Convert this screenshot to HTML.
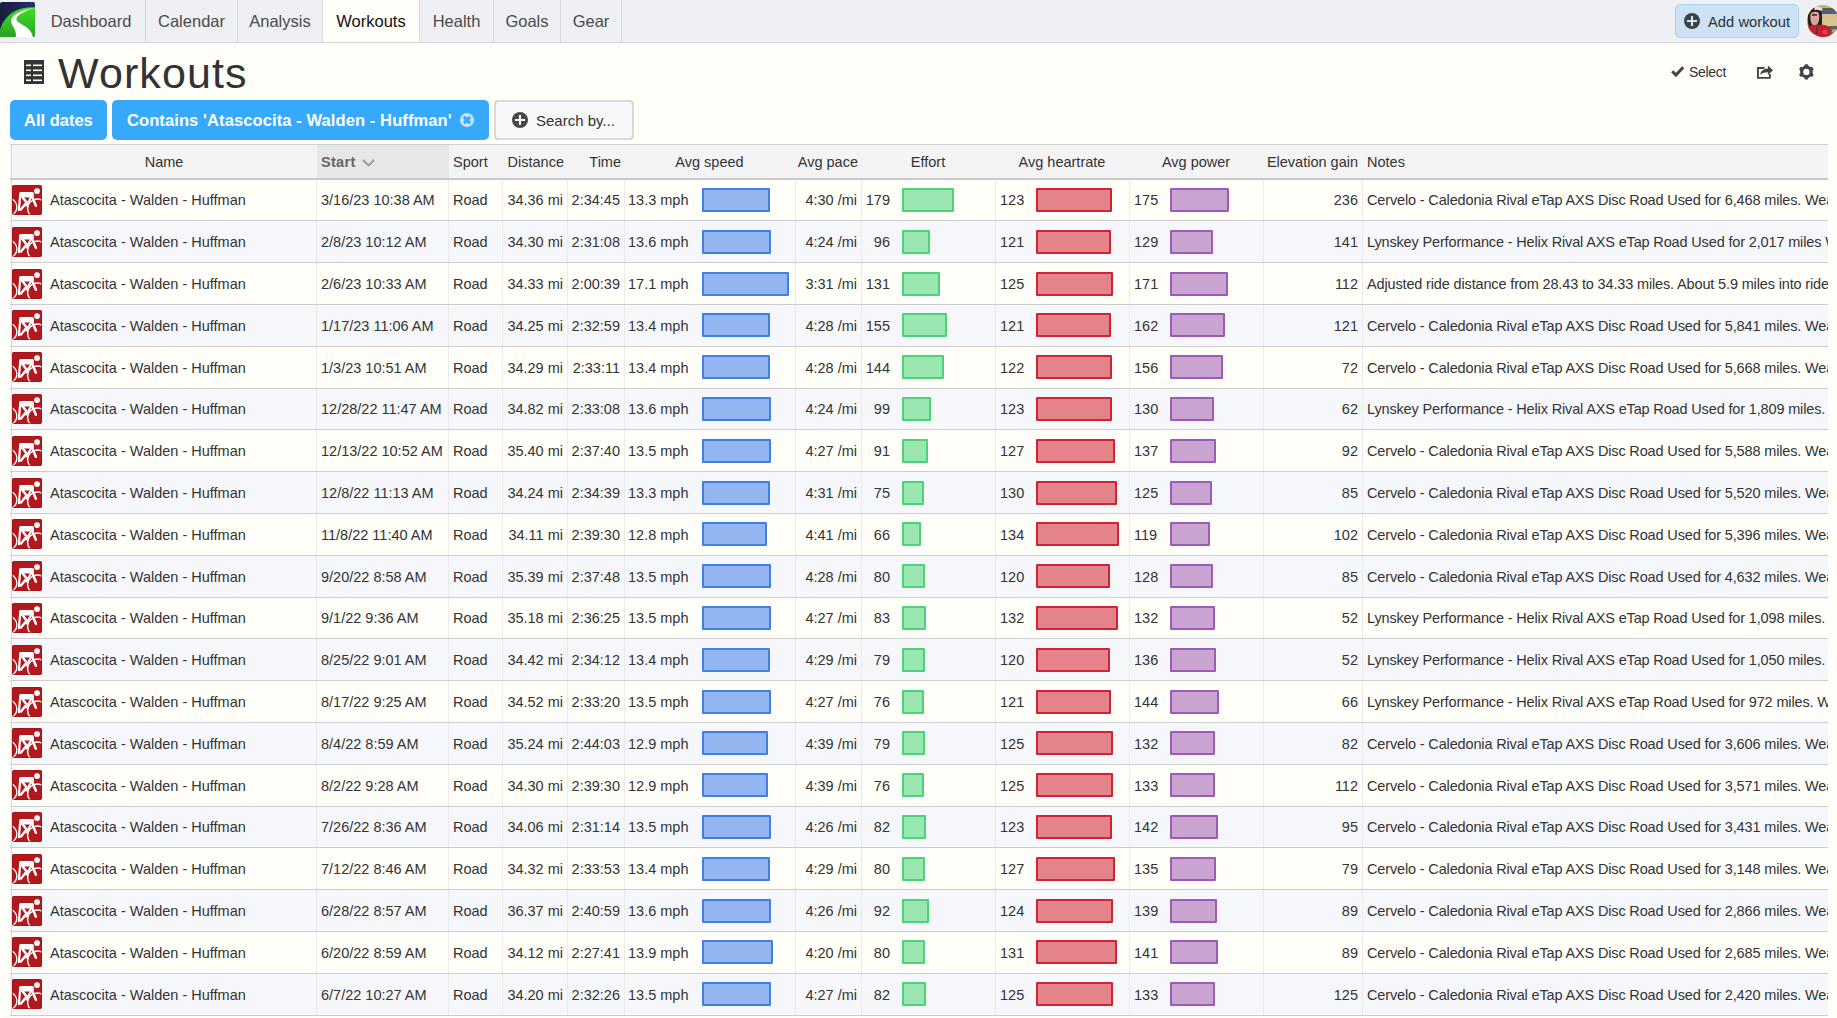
<!DOCTYPE html>
<html><head><meta charset="utf-8"><title>Workouts</title>
<style>
*{box-sizing:border-box}
html,body{margin:0;padding:0}
body{width:1837px;height:1018px;overflow:hidden;position:relative;background:#fffef9;font-family:"Liberation Sans",sans-serif;color:#333}
.nav{position:absolute;left:0;top:0;width:1837px;height:43px;background:#eff0f3;border-bottom:1px solid #d4d6da}
.tab{position:absolute;top:0;height:42px;line-height:42px;font-size:16.5px;color:#4a4a4a;text-align:center}
.sep{position:absolute;top:0;width:1px;height:42px;background:#d8d9dc}
.active{background:#fffef9;color:#111}
.title{position:absolute;left:58px;top:48px;font-size:43px;letter-spacing:1.1px;line-height:50px;color:#333}
.btn{position:absolute;top:100px;height:40px;border-radius:5px;background:#36a9fb;color:#fff;font-weight:bold;font-size:16.5px;line-height:40px;white-space:nowrap}
.tbl{position:absolute;left:10px;top:144px;width:1818px;height:874px;overflow:hidden}
.thead{position:absolute;left:0;top:0;width:1818px;height:36px;background:#f4f4f5;border-top:1px solid #cfd0d2;border-bottom:2px solid #c9c9c9}
.th{position:absolute;top:1px;height:33px;line-height:33px;font-size:14.5px;color:#333;white-space:nowrap}
.r{position:absolute;left:0;width:1818px;border-bottom:1px solid #cdcdcd;box-sizing:content-box}
.odd{background:#fffef9}
.even{background:#f6f7fa}
.vb{position:absolute;top:0;bottom:0;width:1px;background:#ebebeb}
.lb{background:#dcdcdc}
.t{position:absolute;top:var(--tt);line-height:20px;font-size:14.5px;white-space:nowrap;color:#333}
.icw{position:absolute;top:var(--it);width:30px;height:30px;line-height:0}
.bar{position:absolute;top:var(--bt);height:24px;border:2px solid;border-radius:1px}
.bs{background:#93b5f0;border-color:#3f7fe7}
.be{background:#9ae6b0;border-color:#4cd378}
.bh{background:#e5838a;border-color:#d12336}
.bp{background:#c9a4d0;border-color:#9d5bb5}
</style></head><body>
<div class="nav">
 <svg style="position:absolute;left:0;top:2px" width="35" height="35" viewBox="0 0 35 35"><defs><linearGradient id="lg" x1="0" y1="0" x2="1" y2="0"><stop offset="0" stop-color="#191d40"/><stop offset="1" stop-color="#27306a"/></linearGradient><linearGradient id="gg" x1="0" y1="0" x2="0" y2="1"><stop offset="0" stop-color="#3fe02c"/><stop offset="1" stop-color="#2ba21f"/></linearGradient><clipPath id="lc"><rect width="35" height="35" rx="2"/></clipPath></defs><g clip-path="url(#lc)"><rect width="35" height="35" fill="url(#lg)"/><path d="M0 35 L0 28 C2 19 10 10 20 7 C26 5.5 31 5.3 35 5.3 L35 35 Z" fill="url(#gg)"/><path d="M15.7 35 C16.8 31 14.5 27 12.5 23.5 C10.5 20 10.5 16.5 14 13.5 C18 10 26 7 33.4 5.9 C26 8.5 20 11.5 17.5 14.5 C15.5 17 16.5 19.5 20.5 21.5 C26 24.5 31.5 28 33 35 Z" fill="#fff"/></g></svg>
 <div class="tab" style="left:37px;width:108px">Dashboard</div><i class="sep" style="left:145px"></i>
 <div class="tab" style="left:146px;width:91px">Calendar</div><i class="sep" style="left:237px"></i>
 <div class="tab" style="left:238px;width:84px">Analysis</div><i class="sep" style="left:322px"></i>
 <div class="tab active" style="left:323px;width:96px">Workouts</div><i class="sep" style="left:419px"></i>
 <div class="tab" style="left:420px;width:73px">Health</div><i class="sep" style="left:493px"></i>
 <div class="tab" style="left:494px;width:66px">Goals</div><i class="sep" style="left:560px"></i>
 <div class="tab" style="left:561px;width:60px">Gear</div><i class="sep" style="left:621px"></i>
 <div style="position:absolute;left:1675px;top:4px;width:124px;height:34px;border:1px solid #a9d2f3;border-radius:5px;background:#cde2f4"></div>
 <svg style="position:absolute;left:1684px;top:13px" width="16" height="16" viewBox="0 0 16 16"><circle cx="8" cy="8" r="8" fill="#3c4146"/><path d="M8 2.9V13.1M2.9 8H13.1" stroke="#cde2f4" stroke-width="2.1"/></svg>
 <div style="position:absolute;left:1708px;top:5px;height:34px;line-height:34px;font-size:14.7px;color:#2b3035;letter-spacing:0.05px">Add workout</div>
 <svg style="position:absolute;left:1807px;top:5px" width="32" height="32" viewBox="0 0 32 32"><defs><clipPath id="av"><circle cx="16" cy="16" r="16"/></clipPath><linearGradient id="wall" x1="0" y1="0" x2="0" y2="1"><stop offset="0" stop-color="#d6be86"/><stop offset="1" stop-color="#d9c792"/></linearGradient></defs><g clip-path="url(#av)"><rect width="32" height="32" fill="#c9b07a"/><rect x="0" y="3" width="32" height="3" fill="#6b5a3a"/><rect x="12" y="5.5" width="20" height="3.5" fill="#3a64a0"/><rect x="12" y="9" width="20" height="12" fill="url(#wall)"/><rect x="20" y="21" width="12" height="11" fill="#6a6152"/><circle cx="27" cy="26" r="2" fill="#b8ad98"/><path d="M1 8 Q4 2 11 3 Q15 4 15 10 L15 20 Q14 24 11 24 L3 24 Q0 20 1 8Z" fill="#2c1c1a"/><path d="M4 8 Q7 6 11 7 Q13 10 12 15 Q11 20 8 21 Q4 20 3.5 15 Q3 10 4 8Z" fill="#d8a696"/><path d="M5 9 Q7 8.5 10 9.5 L10 11 Q7 10.5 5 11Z" fill="#5a3530"/><path d="M8 2 Q12 1 16 4 L14 6 Q11 4 7 5Z" fill="#dfe6f0"/><path d="M0 22 Q6 19 13 20 Q20 19 23 24 L24 32 L0 32Z" fill="#c41f2a"/><path d="M9 21 L11 21 L10.5 29 L9 29Z" fill="#4a3a48"/><circle cx="18" cy="27" r="2.5" fill="#e04050"/></g></svg>
</div>
<svg style="position:absolute;left:24px;top:60px" width="20" height="24" viewBox="0 0 20 24"><rect width="20" height="24" fill="#333"/><g fill="#fff"><rect x="2" y="4.5" width="5" height="1.6"/><rect x="9" y="4.5" width="9" height="1.6"/><rect x="2" y="9.5" width="5" height="1.6"/><rect x="9" y="9.5" width="9" height="1.6"/><rect x="2" y="14.5" width="5" height="1.6"/><rect x="9" y="14.5" width="9" height="1.6"/><rect x="2" y="19.5" width="5" height="1.6"/><rect x="9" y="19.5" width="9" height="1.6"/></g></svg>
<div class="title">Workouts</div>
<svg style="position:absolute;left:1670px;top:64px" width="15" height="14" viewBox="0 0 15 14"><path d="M2.2 7.3 L5.9 11 L13.2 3.3" stroke="#444" stroke-width="3" fill="none" stroke-linejoin="miter"/></svg>
<div style="position:absolute;left:1689px;top:60px;line-height:24px;font-size:14px;letter-spacing:-0.3px;color:#333">Select</div>
<svg style="position:absolute;left:1756px;top:64px" width="18" height="16" viewBox="0 0 18 16"><path d="M8.5 3.95 H1.95 V13.85 H13.85 V10" stroke="#444" stroke-width="1.9" fill="none"/><path d="M4.2 10.8 C4.8 6.6 7.8 4.7 11.9 4.7 V1.5 L17 6.2 L11.9 10.9 V8.2 C8.6 8.2 6.2 8.9 4.2 10.8 Z" fill="#444"/></svg>
<svg style="position:absolute;left:1798px;top:63px" width="17" height="18" viewBox="0 0 17 18"><g transform="translate(8.4 8.9)" fill="#444"><path fill-rule="evenodd" d="M0 -6.3 A6.3 6.3 0 1 1 0 6.3 A6.3 6.3 0 1 1 0 -6.3Z M0 -3.2 A3.2 3.2 0 1 0 0 3.2 A3.2 3.2 0 1 0 0 -3.2Z"/><rect x="-1.8" y="-7.6" width="3.6" height="4" rx="0.9" transform="rotate(0)"/><rect x="-1.8" y="-7.6" width="3.6" height="4" rx="0.9" transform="rotate(60)"/><rect x="-1.8" y="-7.6" width="3.6" height="4" rx="0.9" transform="rotate(120)"/><rect x="-1.8" y="-7.6" width="3.6" height="4" rx="0.9" transform="rotate(180)"/><rect x="-1.8" y="-7.6" width="3.6" height="4" rx="0.9" transform="rotate(240)"/><rect x="-1.8" y="-7.6" width="3.6" height="4" rx="0.9" transform="rotate(300)"/></g></svg>
<div class="btn" style="left:10px;width:97px;padding-left:14px">All dates</div>
<div class="btn" style="left:112px;width:377px;padding-left:15px;letter-spacing:0.1px">Contains 'Atascocita - Walden - Huffman'</div>
<svg style="position:absolute;left:459px;top:112px" width="16" height="16" viewBox="0 0 16 16"><circle cx="8" cy="8" r="7" fill="#c6e4fb"/><path d="M4.9 4.9L11.1 11.1M11.1 4.9L4.9 11.1" stroke="#36a9fb" stroke-width="3"/></svg>
<div style="position:absolute;left:494px;top:100px;width:140px;height:40px;border:2px solid #d9d9d9;border-radius:4px;background:#f7f8fa"></div>
<svg style="position:absolute;left:512px;top:112px" width="16" height="16" viewBox="0 0 16 16"><circle cx="8" cy="8" r="8" fill="#474747"/><path d="M8 2.9V13.1M2.9 8H13.1" stroke="#f7f8fa" stroke-width="2.1"/></svg>
<div style="position:absolute;left:536px;top:101px;line-height:40px;font-size:15px;color:#333">Search by...</div>
<div class="tbl">
<div class="thead">
 <i style="position:absolute;left:1px;top:0;width:1px;height:33px;background:#dcdcdc"></i>
 <div style="position:absolute;left:307px;top:0;width:132px;height:33px;background:#e7e7e7"></div>
 <div class="th" style="left:1px;width:306px;text-align:center">Name</div>
 <div class="th" style="left:311px;font-weight:bold;color:#666;letter-spacing:0.3px">Start</div>
 <svg style="position:absolute;left:352px;top:13.5px" width="13" height="8" viewBox="0 0 13 8"><path d="M1 1L6.5 6.5L12 1" stroke="#9a9a9a" stroke-width="1.8" fill="none"/></svg>
 <div class="th" style="left:443px">Sport</div>
 <div class="th" style="right:1264px">Distance</div>
 <div class="th" style="right:1207px">Time</div>
 <div class="th" style="left:614px;width:171px;text-align:center">Avg speed</div>
 <div class="th" style="right:970px">Avg pace</div>
 <div class="th" style="left:851px;width:134px;text-align:center">Effort</div>
 <div class="th" style="left:985px;width:134px;text-align:center">Avg heartrate</div>
 <div class="th" style="left:1119px;width:134px;text-align:center">Avg power</div>
 <div class="th" style="right:470px">Elevation gain</div>
 <div class="th" style="left:1357px">Notes</div>
</div>
<div class="r odd" style="top:36px;height:40px;--tt:10px;--bt:8px;--it:5px"><i class="vb" style="left:306px"></i><i class="vb" style="left:438px"></i><i class="vb" style="left:492px"></i><i class="vb" style="left:557px"></i><i class="vb" style="left:614px"></i><i class="vb" style="left:785px"></i><i class="vb" style="left:851px"></i><i class="vb" style="left:985px"></i><i class="vb" style="left:1119px"></i><i class="vb" style="left:1253px"></i><i class="vb" style="left:1352px"></i><i class="vb lb" style="left:1px"></i><div class="icw" style="left:2px"><svg width="30" height="30" viewBox="0 0 30 30"><defs><clipPath id="c"><rect width="30" height="30" rx="2"/></clipPath></defs><rect width="30" height="30" rx="2" fill="#b3191c"/><g clip-path="url(#c)" stroke="#fff" fill="none"><circle cx="-4" cy="22" r="8.9" stroke-width="1.3"/><circle cx="25.2" cy="23.6" r="9.6" stroke-width="1.4"/><g stroke-linecap="round"><path d="M8.2 10 L6.9 25.2" stroke-width="2.2"/><path d="M10 11.5 L14.6 17.4 L9 24.6" stroke-width="2.4" stroke-linejoin="round"/><path d="M19.3 12 L14.2 20.5" stroke-width="2.1"/><path d="M20.3 12.2 L23.9 20.8" stroke-width="2.5"/></g></g><rect x="7.1" y="6.9" width="14.8" height="5.5" rx="1.5" fill="#fff"/><circle cx="25.05" cy="6.04" r="2.9" fill="#fff"/><rect x="0.5" y="0.5" width="29" height="29" rx="1.6" fill="none" stroke="#9c1417" stroke-width="1" stroke-opacity="0.7"/></svg></div><div class="t" style="left:40px">Atascocita - Walden - Huffman</div><div class="t" style="left:311px">3/16/23 10:38 AM</div><div class="t" style="left:443px">Road</div><div class="t rt" style="right:1265px">34.36 mi</div><div class="t rt" style="right:1208px">2:34:45</div><div class="t" style="left:618px">13.3 mph</div><div class="bar bs" style="left:692px;width:68px"></div><div class="t rt" style="right:971px">4:30 /mi</div><div class="t rt" style="right:938px">179</div><div class="bar be" style="left:892px;width:52px"></div><div class="t" style="left:990px">123</div><div class="bar bh" style="left:1026px;width:76px"></div><div class="t" style="left:1124px">175</div><div class="bar bp" style="left:1160px;width:59px"></div><div class="t rt" style="right:470px">236</div><div class="t" style="left:1357px;letter-spacing:-0.15px">Cervelo - Caledonia Rival eTap AXS Disc Road Used for 6,468 miles. Wear</div></div><div class="r even" style="top:77px;height:41px;--tt:11px;--bt:9px;--it:6px"><i class="vb" style="left:306px"></i><i class="vb" style="left:438px"></i><i class="vb" style="left:492px"></i><i class="vb" style="left:557px"></i><i class="vb" style="left:614px"></i><i class="vb" style="left:785px"></i><i class="vb" style="left:851px"></i><i class="vb" style="left:985px"></i><i class="vb" style="left:1119px"></i><i class="vb" style="left:1253px"></i><i class="vb" style="left:1352px"></i><i class="vb lb" style="left:1px"></i><div class="icw" style="left:2px"><svg width="30" height="30" viewBox="0 0 30 30"><defs><clipPath id="c"><rect width="30" height="30" rx="2"/></clipPath></defs><rect width="30" height="30" rx="2" fill="#b3191c"/><g clip-path="url(#c)" stroke="#fff" fill="none"><circle cx="-4" cy="22" r="8.9" stroke-width="1.3"/><circle cx="25.2" cy="23.6" r="9.6" stroke-width="1.4"/><g stroke-linecap="round"><path d="M8.2 10 L6.9 25.2" stroke-width="2.2"/><path d="M10 11.5 L14.6 17.4 L9 24.6" stroke-width="2.4" stroke-linejoin="round"/><path d="M19.3 12 L14.2 20.5" stroke-width="2.1"/><path d="M20.3 12.2 L23.9 20.8" stroke-width="2.5"/></g></g><rect x="7.1" y="6.9" width="14.8" height="5.5" rx="1.5" fill="#fff"/><circle cx="25.05" cy="6.04" r="2.9" fill="#fff"/><rect x="0.5" y="0.5" width="29" height="29" rx="1.6" fill="none" stroke="#9c1417" stroke-width="1" stroke-opacity="0.7"/></svg></div><div class="t" style="left:40px">Atascocita - Walden - Huffman</div><div class="t" style="left:311px">2/8/23 10:12 AM</div><div class="t" style="left:443px">Road</div><div class="t rt" style="right:1265px">34.30 mi</div><div class="t rt" style="right:1208px">2:31:08</div><div class="t" style="left:618px">13.6 mph</div><div class="bar bs" style="left:692px;width:69px"></div><div class="t rt" style="right:971px">4:24 /mi</div><div class="t rt" style="right:938px">96</div><div class="bar be" style="left:892px;width:28px"></div><div class="t" style="left:990px">121</div><div class="bar bh" style="left:1026px;width:75px"></div><div class="t" style="left:1124px">129</div><div class="bar bp" style="left:1160px;width:43px"></div><div class="t rt" style="right:470px">141</div><div class="t" style="left:1357px;letter-spacing:-0.15px">Lynskey Performance - Helix Rival AXS eTap Road Used for 2,017 miles Wear</div></div><div class="r odd" style="top:119px;height:41px;--tt:11px;--bt:9px;--it:6px"><i class="vb" style="left:306px"></i><i class="vb" style="left:438px"></i><i class="vb" style="left:492px"></i><i class="vb" style="left:557px"></i><i class="vb" style="left:614px"></i><i class="vb" style="left:785px"></i><i class="vb" style="left:851px"></i><i class="vb" style="left:985px"></i><i class="vb" style="left:1119px"></i><i class="vb" style="left:1253px"></i><i class="vb" style="left:1352px"></i><i class="vb lb" style="left:1px"></i><div class="icw" style="left:2px"><svg width="30" height="30" viewBox="0 0 30 30"><defs><clipPath id="c"><rect width="30" height="30" rx="2"/></clipPath></defs><rect width="30" height="30" rx="2" fill="#b3191c"/><g clip-path="url(#c)" stroke="#fff" fill="none"><circle cx="-4" cy="22" r="8.9" stroke-width="1.3"/><circle cx="25.2" cy="23.6" r="9.6" stroke-width="1.4"/><g stroke-linecap="round"><path d="M8.2 10 L6.9 25.2" stroke-width="2.2"/><path d="M10 11.5 L14.6 17.4 L9 24.6" stroke-width="2.4" stroke-linejoin="round"/><path d="M19.3 12 L14.2 20.5" stroke-width="2.1"/><path d="M20.3 12.2 L23.9 20.8" stroke-width="2.5"/></g></g><rect x="7.1" y="6.9" width="14.8" height="5.5" rx="1.5" fill="#fff"/><circle cx="25.05" cy="6.04" r="2.9" fill="#fff"/><rect x="0.5" y="0.5" width="29" height="29" rx="1.6" fill="none" stroke="#9c1417" stroke-width="1" stroke-opacity="0.7"/></svg></div><div class="t" style="left:40px">Atascocita - Walden - Huffman</div><div class="t" style="left:311px">2/6/23 10:33 AM</div><div class="t" style="left:443px">Road</div><div class="t rt" style="right:1265px">34.33 mi</div><div class="t rt" style="right:1208px">2:00:39</div><div class="t" style="left:618px">17.1 mph</div><div class="bar bs" style="left:692px;width:87px"></div><div class="t rt" style="right:971px">3:31 /mi</div><div class="t rt" style="right:938px">131</div><div class="bar be" style="left:892px;width:38px"></div><div class="t" style="left:990px">125</div><div class="bar bh" style="left:1026px;width:77px"></div><div class="t" style="left:1124px">171</div><div class="bar bp" style="left:1160px;width:58px"></div><div class="t rt" style="right:470px">112</div><div class="t" style="left:1357px;letter-spacing:-0.15px">Adjusted ride distance from 28.43 to 34.33 miles. About 5.9 miles into ride</div></div><div class="r even" style="top:161px;height:41px;--tt:11px;--bt:8px;--it:5px"><i class="vb" style="left:306px"></i><i class="vb" style="left:438px"></i><i class="vb" style="left:492px"></i><i class="vb" style="left:557px"></i><i class="vb" style="left:614px"></i><i class="vb" style="left:785px"></i><i class="vb" style="left:851px"></i><i class="vb" style="left:985px"></i><i class="vb" style="left:1119px"></i><i class="vb" style="left:1253px"></i><i class="vb" style="left:1352px"></i><i class="vb lb" style="left:1px"></i><div class="icw" style="left:2px"><svg width="30" height="30" viewBox="0 0 30 30"><defs><clipPath id="c"><rect width="30" height="30" rx="2"/></clipPath></defs><rect width="30" height="30" rx="2" fill="#b3191c"/><g clip-path="url(#c)" stroke="#fff" fill="none"><circle cx="-4" cy="22" r="8.9" stroke-width="1.3"/><circle cx="25.2" cy="23.6" r="9.6" stroke-width="1.4"/><g stroke-linecap="round"><path d="M8.2 10 L6.9 25.2" stroke-width="2.2"/><path d="M10 11.5 L14.6 17.4 L9 24.6" stroke-width="2.4" stroke-linejoin="round"/><path d="M19.3 12 L14.2 20.5" stroke-width="2.1"/><path d="M20.3 12.2 L23.9 20.8" stroke-width="2.5"/></g></g><rect x="7.1" y="6.9" width="14.8" height="5.5" rx="1.5" fill="#fff"/><circle cx="25.05" cy="6.04" r="2.9" fill="#fff"/><rect x="0.5" y="0.5" width="29" height="29" rx="1.6" fill="none" stroke="#9c1417" stroke-width="1" stroke-opacity="0.7"/></svg></div><div class="t" style="left:40px">Atascocita - Walden - Huffman</div><div class="t" style="left:311px">1/17/23 11:06 AM</div><div class="t" style="left:443px">Road</div><div class="t rt" style="right:1265px">34.25 mi</div><div class="t rt" style="right:1208px">2:32:59</div><div class="t" style="left:618px">13.4 mph</div><div class="bar bs" style="left:692px;width:68px"></div><div class="t rt" style="right:971px">4:28 /mi</div><div class="t rt" style="right:938px">155</div><div class="bar be" style="left:892px;width:45px"></div><div class="t" style="left:990px">121</div><div class="bar bh" style="left:1026px;width:75px"></div><div class="t" style="left:1124px">162</div><div class="bar bp" style="left:1160px;width:55px"></div><div class="t rt" style="right:470px">121</div><div class="t" style="left:1357px;letter-spacing:-0.15px">Cervelo - Caledonia Rival eTap AXS Disc Road Used for 5,841 miles. Wear</div></div><div class="r odd" style="top:203px;height:41px;--tt:11px;--bt:8px;--it:5px"><i class="vb" style="left:306px"></i><i class="vb" style="left:438px"></i><i class="vb" style="left:492px"></i><i class="vb" style="left:557px"></i><i class="vb" style="left:614px"></i><i class="vb" style="left:785px"></i><i class="vb" style="left:851px"></i><i class="vb" style="left:985px"></i><i class="vb" style="left:1119px"></i><i class="vb" style="left:1253px"></i><i class="vb" style="left:1352px"></i><i class="vb lb" style="left:1px"></i><div class="icw" style="left:2px"><svg width="30" height="30" viewBox="0 0 30 30"><defs><clipPath id="c"><rect width="30" height="30" rx="2"/></clipPath></defs><rect width="30" height="30" rx="2" fill="#b3191c"/><g clip-path="url(#c)" stroke="#fff" fill="none"><circle cx="-4" cy="22" r="8.9" stroke-width="1.3"/><circle cx="25.2" cy="23.6" r="9.6" stroke-width="1.4"/><g stroke-linecap="round"><path d="M8.2 10 L6.9 25.2" stroke-width="2.2"/><path d="M10 11.5 L14.6 17.4 L9 24.6" stroke-width="2.4" stroke-linejoin="round"/><path d="M19.3 12 L14.2 20.5" stroke-width="2.1"/><path d="M20.3 12.2 L23.9 20.8" stroke-width="2.5"/></g></g><rect x="7.1" y="6.9" width="14.8" height="5.5" rx="1.5" fill="#fff"/><circle cx="25.05" cy="6.04" r="2.9" fill="#fff"/><rect x="0.5" y="0.5" width="29" height="29" rx="1.6" fill="none" stroke="#9c1417" stroke-width="1" stroke-opacity="0.7"/></svg></div><div class="t" style="left:40px">Atascocita - Walden - Huffman</div><div class="t" style="left:311px">1/3/23 10:51 AM</div><div class="t" style="left:443px">Road</div><div class="t rt" style="right:1265px">34.29 mi</div><div class="t rt" style="right:1208px">2:33:11</div><div class="t" style="left:618px">13.4 mph</div><div class="bar bs" style="left:692px;width:68px"></div><div class="t rt" style="right:971px">4:28 /mi</div><div class="t rt" style="right:938px">144</div><div class="bar be" style="left:892px;width:42px"></div><div class="t" style="left:990px">122</div><div class="bar bh" style="left:1026px;width:76px"></div><div class="t" style="left:1124px">156</div><div class="bar bp" style="left:1160px;width:53px"></div><div class="t rt" style="right:470px">72</div><div class="t" style="left:1357px;letter-spacing:-0.15px">Cervelo - Caledonia Rival eTap AXS Disc Road Used for 5,668 miles. Wear</div></div><div class="r even" style="top:245px;height:40px;--tt:10px;--bt:8px;--it:5px"><i class="vb" style="left:306px"></i><i class="vb" style="left:438px"></i><i class="vb" style="left:492px"></i><i class="vb" style="left:557px"></i><i class="vb" style="left:614px"></i><i class="vb" style="left:785px"></i><i class="vb" style="left:851px"></i><i class="vb" style="left:985px"></i><i class="vb" style="left:1119px"></i><i class="vb" style="left:1253px"></i><i class="vb" style="left:1352px"></i><i class="vb lb" style="left:1px"></i><div class="icw" style="left:2px"><svg width="30" height="30" viewBox="0 0 30 30"><defs><clipPath id="c"><rect width="30" height="30" rx="2"/></clipPath></defs><rect width="30" height="30" rx="2" fill="#b3191c"/><g clip-path="url(#c)" stroke="#fff" fill="none"><circle cx="-4" cy="22" r="8.9" stroke-width="1.3"/><circle cx="25.2" cy="23.6" r="9.6" stroke-width="1.4"/><g stroke-linecap="round"><path d="M8.2 10 L6.9 25.2" stroke-width="2.2"/><path d="M10 11.5 L14.6 17.4 L9 24.6" stroke-width="2.4" stroke-linejoin="round"/><path d="M19.3 12 L14.2 20.5" stroke-width="2.1"/><path d="M20.3 12.2 L23.9 20.8" stroke-width="2.5"/></g></g><rect x="7.1" y="6.9" width="14.8" height="5.5" rx="1.5" fill="#fff"/><circle cx="25.05" cy="6.04" r="2.9" fill="#fff"/><rect x="0.5" y="0.5" width="29" height="29" rx="1.6" fill="none" stroke="#9c1417" stroke-width="1" stroke-opacity="0.7"/></svg></div><div class="t" style="left:40px">Atascocita - Walden - Huffman</div><div class="t" style="left:311px">12/28/22 11:47 AM</div><div class="t" style="left:443px">Road</div><div class="t rt" style="right:1265px">34.82 mi</div><div class="t rt" style="right:1208px">2:33:08</div><div class="t" style="left:618px">13.6 mph</div><div class="bar bs" style="left:692px;width:69px"></div><div class="t rt" style="right:971px">4:24 /mi</div><div class="t rt" style="right:938px">99</div><div class="bar be" style="left:892px;width:29px"></div><div class="t" style="left:990px">123</div><div class="bar bh" style="left:1026px;width:76px"></div><div class="t" style="left:1124px">130</div><div class="bar bp" style="left:1160px;width:44px"></div><div class="t rt" style="right:470px">62</div><div class="t" style="left:1357px;letter-spacing:-0.15px">Lynskey Performance - Helix Rival AXS eTap Road Used for 1,809 miles. Wear</div></div><div class="r odd" style="top:286px;height:41px;--tt:11px;--bt:9px;--it:6px"><i class="vb" style="left:306px"></i><i class="vb" style="left:438px"></i><i class="vb" style="left:492px"></i><i class="vb" style="left:557px"></i><i class="vb" style="left:614px"></i><i class="vb" style="left:785px"></i><i class="vb" style="left:851px"></i><i class="vb" style="left:985px"></i><i class="vb" style="left:1119px"></i><i class="vb" style="left:1253px"></i><i class="vb" style="left:1352px"></i><i class="vb lb" style="left:1px"></i><div class="icw" style="left:2px"><svg width="30" height="30" viewBox="0 0 30 30"><defs><clipPath id="c"><rect width="30" height="30" rx="2"/></clipPath></defs><rect width="30" height="30" rx="2" fill="#b3191c"/><g clip-path="url(#c)" stroke="#fff" fill="none"><circle cx="-4" cy="22" r="8.9" stroke-width="1.3"/><circle cx="25.2" cy="23.6" r="9.6" stroke-width="1.4"/><g stroke-linecap="round"><path d="M8.2 10 L6.9 25.2" stroke-width="2.2"/><path d="M10 11.5 L14.6 17.4 L9 24.6" stroke-width="2.4" stroke-linejoin="round"/><path d="M19.3 12 L14.2 20.5" stroke-width="2.1"/><path d="M20.3 12.2 L23.9 20.8" stroke-width="2.5"/></g></g><rect x="7.1" y="6.9" width="14.8" height="5.5" rx="1.5" fill="#fff"/><circle cx="25.05" cy="6.04" r="2.9" fill="#fff"/><rect x="0.5" y="0.5" width="29" height="29" rx="1.6" fill="none" stroke="#9c1417" stroke-width="1" stroke-opacity="0.7"/></svg></div><div class="t" style="left:40px">Atascocita - Walden - Huffman</div><div class="t" style="left:311px">12/13/22 10:52 AM</div><div class="t" style="left:443px">Road</div><div class="t rt" style="right:1265px">35.40 mi</div><div class="t rt" style="right:1208px">2:37:40</div><div class="t" style="left:618px">13.5 mph</div><div class="bar bs" style="left:692px;width:69px"></div><div class="t rt" style="right:971px">4:27 /mi</div><div class="t rt" style="right:938px">91</div><div class="bar be" style="left:892px;width:26px"></div><div class="t" style="left:990px">127</div><div class="bar bh" style="left:1026px;width:79px"></div><div class="t" style="left:1124px">137</div><div class="bar bp" style="left:1160px;width:46px"></div><div class="t rt" style="right:470px">92</div><div class="t" style="left:1357px;letter-spacing:-0.15px">Cervelo - Caledonia Rival eTap AXS Disc Road Used for 5,588 miles. Wear</div></div><div class="r even" style="top:328px;height:41px;--tt:11px;--bt:9px;--it:6px"><i class="vb" style="left:306px"></i><i class="vb" style="left:438px"></i><i class="vb" style="left:492px"></i><i class="vb" style="left:557px"></i><i class="vb" style="left:614px"></i><i class="vb" style="left:785px"></i><i class="vb" style="left:851px"></i><i class="vb" style="left:985px"></i><i class="vb" style="left:1119px"></i><i class="vb" style="left:1253px"></i><i class="vb" style="left:1352px"></i><i class="vb lb" style="left:1px"></i><div class="icw" style="left:2px"><svg width="30" height="30" viewBox="0 0 30 30"><defs><clipPath id="c"><rect width="30" height="30" rx="2"/></clipPath></defs><rect width="30" height="30" rx="2" fill="#b3191c"/><g clip-path="url(#c)" stroke="#fff" fill="none"><circle cx="-4" cy="22" r="8.9" stroke-width="1.3"/><circle cx="25.2" cy="23.6" r="9.6" stroke-width="1.4"/><g stroke-linecap="round"><path d="M8.2 10 L6.9 25.2" stroke-width="2.2"/><path d="M10 11.5 L14.6 17.4 L9 24.6" stroke-width="2.4" stroke-linejoin="round"/><path d="M19.3 12 L14.2 20.5" stroke-width="2.1"/><path d="M20.3 12.2 L23.9 20.8" stroke-width="2.5"/></g></g><rect x="7.1" y="6.9" width="14.8" height="5.5" rx="1.5" fill="#fff"/><circle cx="25.05" cy="6.04" r="2.9" fill="#fff"/><rect x="0.5" y="0.5" width="29" height="29" rx="1.6" fill="none" stroke="#9c1417" stroke-width="1" stroke-opacity="0.7"/></svg></div><div class="t" style="left:40px">Atascocita - Walden - Huffman</div><div class="t" style="left:311px">12/8/22 11:13 AM</div><div class="t" style="left:443px">Road</div><div class="t rt" style="right:1265px">34.24 mi</div><div class="t rt" style="right:1208px">2:34:39</div><div class="t" style="left:618px">13.3 mph</div><div class="bar bs" style="left:692px;width:68px"></div><div class="t rt" style="right:971px">4:31 /mi</div><div class="t rt" style="right:938px">75</div><div class="bar be" style="left:892px;width:22px"></div><div class="t" style="left:990px">130</div><div class="bar bh" style="left:1026px;width:81px"></div><div class="t" style="left:1124px">125</div><div class="bar bp" style="left:1160px;width:42px"></div><div class="t rt" style="right:470px">85</div><div class="t" style="left:1357px;letter-spacing:-0.15px">Cervelo - Caledonia Rival eTap AXS Disc Road Used for 5,520 miles. Wear</div></div><div class="r odd" style="top:370px;height:41px;--tt:11px;--bt:8px;--it:5px"><i class="vb" style="left:306px"></i><i class="vb" style="left:438px"></i><i class="vb" style="left:492px"></i><i class="vb" style="left:557px"></i><i class="vb" style="left:614px"></i><i class="vb" style="left:785px"></i><i class="vb" style="left:851px"></i><i class="vb" style="left:985px"></i><i class="vb" style="left:1119px"></i><i class="vb" style="left:1253px"></i><i class="vb" style="left:1352px"></i><i class="vb lb" style="left:1px"></i><div class="icw" style="left:2px"><svg width="30" height="30" viewBox="0 0 30 30"><defs><clipPath id="c"><rect width="30" height="30" rx="2"/></clipPath></defs><rect width="30" height="30" rx="2" fill="#b3191c"/><g clip-path="url(#c)" stroke="#fff" fill="none"><circle cx="-4" cy="22" r="8.9" stroke-width="1.3"/><circle cx="25.2" cy="23.6" r="9.6" stroke-width="1.4"/><g stroke-linecap="round"><path d="M8.2 10 L6.9 25.2" stroke-width="2.2"/><path d="M10 11.5 L14.6 17.4 L9 24.6" stroke-width="2.4" stroke-linejoin="round"/><path d="M19.3 12 L14.2 20.5" stroke-width="2.1"/><path d="M20.3 12.2 L23.9 20.8" stroke-width="2.5"/></g></g><rect x="7.1" y="6.9" width="14.8" height="5.5" rx="1.5" fill="#fff"/><circle cx="25.05" cy="6.04" r="2.9" fill="#fff"/><rect x="0.5" y="0.5" width="29" height="29" rx="1.6" fill="none" stroke="#9c1417" stroke-width="1" stroke-opacity="0.7"/></svg></div><div class="t" style="left:40px">Atascocita - Walden - Huffman</div><div class="t" style="left:311px">11/8/22 11:40 AM</div><div class="t" style="left:443px">Road</div><div class="t rt" style="right:1265px">34.11 mi</div><div class="t rt" style="right:1208px">2:39:30</div><div class="t" style="left:618px">12.8 mph</div><div class="bar bs" style="left:692px;width:65px"></div><div class="t rt" style="right:971px">4:41 /mi</div><div class="t rt" style="right:938px">66</div><div class="bar be" style="left:892px;width:19px"></div><div class="t" style="left:990px">134</div><div class="bar bh" style="left:1026px;width:83px"></div><div class="t" style="left:1124px">119</div><div class="bar bp" style="left:1160px;width:40px"></div><div class="t rt" style="right:470px">102</div><div class="t" style="left:1357px;letter-spacing:-0.15px">Cervelo - Caledonia Rival eTap AXS Disc Road Used for 5,396 miles. Wear</div></div><div class="r even" style="top:412px;height:41px;--tt:11px;--bt:8px;--it:5px"><i class="vb" style="left:306px"></i><i class="vb" style="left:438px"></i><i class="vb" style="left:492px"></i><i class="vb" style="left:557px"></i><i class="vb" style="left:614px"></i><i class="vb" style="left:785px"></i><i class="vb" style="left:851px"></i><i class="vb" style="left:985px"></i><i class="vb" style="left:1119px"></i><i class="vb" style="left:1253px"></i><i class="vb" style="left:1352px"></i><i class="vb lb" style="left:1px"></i><div class="icw" style="left:2px"><svg width="30" height="30" viewBox="0 0 30 30"><defs><clipPath id="c"><rect width="30" height="30" rx="2"/></clipPath></defs><rect width="30" height="30" rx="2" fill="#b3191c"/><g clip-path="url(#c)" stroke="#fff" fill="none"><circle cx="-4" cy="22" r="8.9" stroke-width="1.3"/><circle cx="25.2" cy="23.6" r="9.6" stroke-width="1.4"/><g stroke-linecap="round"><path d="M8.2 10 L6.9 25.2" stroke-width="2.2"/><path d="M10 11.5 L14.6 17.4 L9 24.6" stroke-width="2.4" stroke-linejoin="round"/><path d="M19.3 12 L14.2 20.5" stroke-width="2.1"/><path d="M20.3 12.2 L23.9 20.8" stroke-width="2.5"/></g></g><rect x="7.1" y="6.9" width="14.8" height="5.5" rx="1.5" fill="#fff"/><circle cx="25.05" cy="6.04" r="2.9" fill="#fff"/><rect x="0.5" y="0.5" width="29" height="29" rx="1.6" fill="none" stroke="#9c1417" stroke-width="1" stroke-opacity="0.7"/></svg></div><div class="t" style="left:40px">Atascocita - Walden - Huffman</div><div class="t" style="left:311px">9/20/22 8:58 AM</div><div class="t" style="left:443px">Road</div><div class="t rt" style="right:1265px">35.39 mi</div><div class="t rt" style="right:1208px">2:37:48</div><div class="t" style="left:618px">13.5 mph</div><div class="bar bs" style="left:692px;width:69px"></div><div class="t rt" style="right:971px">4:28 /mi</div><div class="t rt" style="right:938px">80</div><div class="bar be" style="left:892px;width:23px"></div><div class="t" style="left:990px">120</div><div class="bar bh" style="left:1026px;width:74px"></div><div class="t" style="left:1124px">128</div><div class="bar bp" style="left:1160px;width:43px"></div><div class="t rt" style="right:470px">85</div><div class="t" style="left:1357px;letter-spacing:-0.15px">Cervelo - Caledonia Rival eTap AXS Disc Road Used for 4,632 miles. Wear</div></div><div class="r odd" style="top:454px;height:40px;--tt:10px;--bt:8px;--it:5px"><i class="vb" style="left:306px"></i><i class="vb" style="left:438px"></i><i class="vb" style="left:492px"></i><i class="vb" style="left:557px"></i><i class="vb" style="left:614px"></i><i class="vb" style="left:785px"></i><i class="vb" style="left:851px"></i><i class="vb" style="left:985px"></i><i class="vb" style="left:1119px"></i><i class="vb" style="left:1253px"></i><i class="vb" style="left:1352px"></i><i class="vb lb" style="left:1px"></i><div class="icw" style="left:2px"><svg width="30" height="30" viewBox="0 0 30 30"><defs><clipPath id="c"><rect width="30" height="30" rx="2"/></clipPath></defs><rect width="30" height="30" rx="2" fill="#b3191c"/><g clip-path="url(#c)" stroke="#fff" fill="none"><circle cx="-4" cy="22" r="8.9" stroke-width="1.3"/><circle cx="25.2" cy="23.6" r="9.6" stroke-width="1.4"/><g stroke-linecap="round"><path d="M8.2 10 L6.9 25.2" stroke-width="2.2"/><path d="M10 11.5 L14.6 17.4 L9 24.6" stroke-width="2.4" stroke-linejoin="round"/><path d="M19.3 12 L14.2 20.5" stroke-width="2.1"/><path d="M20.3 12.2 L23.9 20.8" stroke-width="2.5"/></g></g><rect x="7.1" y="6.9" width="14.8" height="5.5" rx="1.5" fill="#fff"/><circle cx="25.05" cy="6.04" r="2.9" fill="#fff"/><rect x="0.5" y="0.5" width="29" height="29" rx="1.6" fill="none" stroke="#9c1417" stroke-width="1" stroke-opacity="0.7"/></svg></div><div class="t" style="left:40px">Atascocita - Walden - Huffman</div><div class="t" style="left:311px">9/1/22 9:36 AM</div><div class="t" style="left:443px">Road</div><div class="t rt" style="right:1265px">35.18 mi</div><div class="t rt" style="right:1208px">2:36:25</div><div class="t" style="left:618px">13.5 mph</div><div class="bar bs" style="left:692px;width:69px"></div><div class="t rt" style="right:971px">4:27 /mi</div><div class="t rt" style="right:938px">83</div><div class="bar be" style="left:892px;width:24px"></div><div class="t" style="left:990px">132</div><div class="bar bh" style="left:1026px;width:82px"></div><div class="t" style="left:1124px">132</div><div class="bar bp" style="left:1160px;width:45px"></div><div class="t rt" style="right:470px">52</div><div class="t" style="left:1357px;letter-spacing:-0.15px">Lynskey Performance - Helix Rival AXS eTap Road Used for 1,098 miles. Wear</div></div><div class="r even" style="top:495px;height:41px;--tt:11px;--bt:9px;--it:6px"><i class="vb" style="left:306px"></i><i class="vb" style="left:438px"></i><i class="vb" style="left:492px"></i><i class="vb" style="left:557px"></i><i class="vb" style="left:614px"></i><i class="vb" style="left:785px"></i><i class="vb" style="left:851px"></i><i class="vb" style="left:985px"></i><i class="vb" style="left:1119px"></i><i class="vb" style="left:1253px"></i><i class="vb" style="left:1352px"></i><i class="vb lb" style="left:1px"></i><div class="icw" style="left:2px"><svg width="30" height="30" viewBox="0 0 30 30"><defs><clipPath id="c"><rect width="30" height="30" rx="2"/></clipPath></defs><rect width="30" height="30" rx="2" fill="#b3191c"/><g clip-path="url(#c)" stroke="#fff" fill="none"><circle cx="-4" cy="22" r="8.9" stroke-width="1.3"/><circle cx="25.2" cy="23.6" r="9.6" stroke-width="1.4"/><g stroke-linecap="round"><path d="M8.2 10 L6.9 25.2" stroke-width="2.2"/><path d="M10 11.5 L14.6 17.4 L9 24.6" stroke-width="2.4" stroke-linejoin="round"/><path d="M19.3 12 L14.2 20.5" stroke-width="2.1"/><path d="M20.3 12.2 L23.9 20.8" stroke-width="2.5"/></g></g><rect x="7.1" y="6.9" width="14.8" height="5.5" rx="1.5" fill="#fff"/><circle cx="25.05" cy="6.04" r="2.9" fill="#fff"/><rect x="0.5" y="0.5" width="29" height="29" rx="1.6" fill="none" stroke="#9c1417" stroke-width="1" stroke-opacity="0.7"/></svg></div><div class="t" style="left:40px">Atascocita - Walden - Huffman</div><div class="t" style="left:311px">8/25/22 9:01 AM</div><div class="t" style="left:443px">Road</div><div class="t rt" style="right:1265px">34.42 mi</div><div class="t rt" style="right:1208px">2:34:12</div><div class="t" style="left:618px">13.4 mph</div><div class="bar bs" style="left:692px;width:68px"></div><div class="t rt" style="right:971px">4:29 /mi</div><div class="t rt" style="right:938px">79</div><div class="bar be" style="left:892px;width:23px"></div><div class="t" style="left:990px">120</div><div class="bar bh" style="left:1026px;width:74px"></div><div class="t" style="left:1124px">136</div><div class="bar bp" style="left:1160px;width:46px"></div><div class="t rt" style="right:470px">52</div><div class="t" style="left:1357px;letter-spacing:-0.15px">Lynskey Performance - Helix Rival AXS eTap Road Used for 1,050 miles. Wear</div></div><div class="r odd" style="top:537px;height:41px;--tt:11px;--bt:9px;--it:6px"><i class="vb" style="left:306px"></i><i class="vb" style="left:438px"></i><i class="vb" style="left:492px"></i><i class="vb" style="left:557px"></i><i class="vb" style="left:614px"></i><i class="vb" style="left:785px"></i><i class="vb" style="left:851px"></i><i class="vb" style="left:985px"></i><i class="vb" style="left:1119px"></i><i class="vb" style="left:1253px"></i><i class="vb" style="left:1352px"></i><i class="vb lb" style="left:1px"></i><div class="icw" style="left:2px"><svg width="30" height="30" viewBox="0 0 30 30"><defs><clipPath id="c"><rect width="30" height="30" rx="2"/></clipPath></defs><rect width="30" height="30" rx="2" fill="#b3191c"/><g clip-path="url(#c)" stroke="#fff" fill="none"><circle cx="-4" cy="22" r="8.9" stroke-width="1.3"/><circle cx="25.2" cy="23.6" r="9.6" stroke-width="1.4"/><g stroke-linecap="round"><path d="M8.2 10 L6.9 25.2" stroke-width="2.2"/><path d="M10 11.5 L14.6 17.4 L9 24.6" stroke-width="2.4" stroke-linejoin="round"/><path d="M19.3 12 L14.2 20.5" stroke-width="2.1"/><path d="M20.3 12.2 L23.9 20.8" stroke-width="2.5"/></g></g><rect x="7.1" y="6.9" width="14.8" height="5.5" rx="1.5" fill="#fff"/><circle cx="25.05" cy="6.04" r="2.9" fill="#fff"/><rect x="0.5" y="0.5" width="29" height="29" rx="1.6" fill="none" stroke="#9c1417" stroke-width="1" stroke-opacity="0.7"/></svg></div><div class="t" style="left:40px">Atascocita - Walden - Huffman</div><div class="t" style="left:311px">8/17/22 9:25 AM</div><div class="t" style="left:443px">Road</div><div class="t rt" style="right:1265px">34.52 mi</div><div class="t rt" style="right:1208px">2:33:20</div><div class="t" style="left:618px">13.5 mph</div><div class="bar bs" style="left:692px;width:69px"></div><div class="t rt" style="right:971px">4:27 /mi</div><div class="t rt" style="right:938px">76</div><div class="bar be" style="left:892px;width:22px"></div><div class="t" style="left:990px">121</div><div class="bar bh" style="left:1026px;width:75px"></div><div class="t" style="left:1124px">144</div><div class="bar bp" style="left:1160px;width:49px"></div><div class="t rt" style="right:470px">66</div><div class="t" style="left:1357px;letter-spacing:-0.15px">Lynskey Performance - Helix Rival AXS eTap Road Used for 972 miles. Wear</div></div><div class="r even" style="top:579px;height:41px;--tt:11px;--bt:8px;--it:5px"><i class="vb" style="left:306px"></i><i class="vb" style="left:438px"></i><i class="vb" style="left:492px"></i><i class="vb" style="left:557px"></i><i class="vb" style="left:614px"></i><i class="vb" style="left:785px"></i><i class="vb" style="left:851px"></i><i class="vb" style="left:985px"></i><i class="vb" style="left:1119px"></i><i class="vb" style="left:1253px"></i><i class="vb" style="left:1352px"></i><i class="vb lb" style="left:1px"></i><div class="icw" style="left:2px"><svg width="30" height="30" viewBox="0 0 30 30"><defs><clipPath id="c"><rect width="30" height="30" rx="2"/></clipPath></defs><rect width="30" height="30" rx="2" fill="#b3191c"/><g clip-path="url(#c)" stroke="#fff" fill="none"><circle cx="-4" cy="22" r="8.9" stroke-width="1.3"/><circle cx="25.2" cy="23.6" r="9.6" stroke-width="1.4"/><g stroke-linecap="round"><path d="M8.2 10 L6.9 25.2" stroke-width="2.2"/><path d="M10 11.5 L14.6 17.4 L9 24.6" stroke-width="2.4" stroke-linejoin="round"/><path d="M19.3 12 L14.2 20.5" stroke-width="2.1"/><path d="M20.3 12.2 L23.9 20.8" stroke-width="2.5"/></g></g><rect x="7.1" y="6.9" width="14.8" height="5.5" rx="1.5" fill="#fff"/><circle cx="25.05" cy="6.04" r="2.9" fill="#fff"/><rect x="0.5" y="0.5" width="29" height="29" rx="1.6" fill="none" stroke="#9c1417" stroke-width="1" stroke-opacity="0.7"/></svg></div><div class="t" style="left:40px">Atascocita - Walden - Huffman</div><div class="t" style="left:311px">8/4/22 8:59 AM</div><div class="t" style="left:443px">Road</div><div class="t rt" style="right:1265px">35.24 mi</div><div class="t rt" style="right:1208px">2:44:03</div><div class="t" style="left:618px">12.9 mph</div><div class="bar bs" style="left:692px;width:66px"></div><div class="t rt" style="right:971px">4:39 /mi</div><div class="t rt" style="right:938px">79</div><div class="bar be" style="left:892px;width:23px"></div><div class="t" style="left:990px">125</div><div class="bar bh" style="left:1026px;width:77px"></div><div class="t" style="left:1124px">132</div><div class="bar bp" style="left:1160px;width:45px"></div><div class="t rt" style="right:470px">82</div><div class="t" style="left:1357px;letter-spacing:-0.15px">Cervelo - Caledonia Rival eTap AXS Disc Road Used for 3,606 miles. Wear</div></div><div class="r odd" style="top:621px;height:41px;--tt:11px;--bt:8px;--it:5px"><i class="vb" style="left:306px"></i><i class="vb" style="left:438px"></i><i class="vb" style="left:492px"></i><i class="vb" style="left:557px"></i><i class="vb" style="left:614px"></i><i class="vb" style="left:785px"></i><i class="vb" style="left:851px"></i><i class="vb" style="left:985px"></i><i class="vb" style="left:1119px"></i><i class="vb" style="left:1253px"></i><i class="vb" style="left:1352px"></i><i class="vb lb" style="left:1px"></i><div class="icw" style="left:2px"><svg width="30" height="30" viewBox="0 0 30 30"><defs><clipPath id="c"><rect width="30" height="30" rx="2"/></clipPath></defs><rect width="30" height="30" rx="2" fill="#b3191c"/><g clip-path="url(#c)" stroke="#fff" fill="none"><circle cx="-4" cy="22" r="8.9" stroke-width="1.3"/><circle cx="25.2" cy="23.6" r="9.6" stroke-width="1.4"/><g stroke-linecap="round"><path d="M8.2 10 L6.9 25.2" stroke-width="2.2"/><path d="M10 11.5 L14.6 17.4 L9 24.6" stroke-width="2.4" stroke-linejoin="round"/><path d="M19.3 12 L14.2 20.5" stroke-width="2.1"/><path d="M20.3 12.2 L23.9 20.8" stroke-width="2.5"/></g></g><rect x="7.1" y="6.9" width="14.8" height="5.5" rx="1.5" fill="#fff"/><circle cx="25.05" cy="6.04" r="2.9" fill="#fff"/><rect x="0.5" y="0.5" width="29" height="29" rx="1.6" fill="none" stroke="#9c1417" stroke-width="1" stroke-opacity="0.7"/></svg></div><div class="t" style="left:40px">Atascocita - Walden - Huffman</div><div class="t" style="left:311px">8/2/22 9:28 AM</div><div class="t" style="left:443px">Road</div><div class="t rt" style="right:1265px">34.30 mi</div><div class="t rt" style="right:1208px">2:39:30</div><div class="t" style="left:618px">12.9 mph</div><div class="bar bs" style="left:692px;width:66px"></div><div class="t rt" style="right:971px">4:39 /mi</div><div class="t rt" style="right:938px">76</div><div class="bar be" style="left:892px;width:22px"></div><div class="t" style="left:990px">125</div><div class="bar bh" style="left:1026px;width:77px"></div><div class="t" style="left:1124px">133</div><div class="bar bp" style="left:1160px;width:45px"></div><div class="t rt" style="right:470px">112</div><div class="t" style="left:1357px;letter-spacing:-0.15px">Cervelo - Caledonia Rival eTap AXS Disc Road Used for 3,571 miles. Wear</div></div><div class="r even" style="top:663px;height:40px;--tt:10px;--bt:8px;--it:5px"><i class="vb" style="left:306px"></i><i class="vb" style="left:438px"></i><i class="vb" style="left:492px"></i><i class="vb" style="left:557px"></i><i class="vb" style="left:614px"></i><i class="vb" style="left:785px"></i><i class="vb" style="left:851px"></i><i class="vb" style="left:985px"></i><i class="vb" style="left:1119px"></i><i class="vb" style="left:1253px"></i><i class="vb" style="left:1352px"></i><i class="vb lb" style="left:1px"></i><div class="icw" style="left:2px"><svg width="30" height="30" viewBox="0 0 30 30"><defs><clipPath id="c"><rect width="30" height="30" rx="2"/></clipPath></defs><rect width="30" height="30" rx="2" fill="#b3191c"/><g clip-path="url(#c)" stroke="#fff" fill="none"><circle cx="-4" cy="22" r="8.9" stroke-width="1.3"/><circle cx="25.2" cy="23.6" r="9.6" stroke-width="1.4"/><g stroke-linecap="round"><path d="M8.2 10 L6.9 25.2" stroke-width="2.2"/><path d="M10 11.5 L14.6 17.4 L9 24.6" stroke-width="2.4" stroke-linejoin="round"/><path d="M19.3 12 L14.2 20.5" stroke-width="2.1"/><path d="M20.3 12.2 L23.9 20.8" stroke-width="2.5"/></g></g><rect x="7.1" y="6.9" width="14.8" height="5.5" rx="1.5" fill="#fff"/><circle cx="25.05" cy="6.04" r="2.9" fill="#fff"/><rect x="0.5" y="0.5" width="29" height="29" rx="1.6" fill="none" stroke="#9c1417" stroke-width="1" stroke-opacity="0.7"/></svg></div><div class="t" style="left:40px">Atascocita - Walden - Huffman</div><div class="t" style="left:311px">7/26/22 8:36 AM</div><div class="t" style="left:443px">Road</div><div class="t rt" style="right:1265px">34.06 mi</div><div class="t rt" style="right:1208px">2:31:14</div><div class="t" style="left:618px">13.5 mph</div><div class="bar bs" style="left:692px;width:69px"></div><div class="t rt" style="right:971px">4:26 /mi</div><div class="t rt" style="right:938px">82</div><div class="bar be" style="left:892px;width:24px"></div><div class="t" style="left:990px">123</div><div class="bar bh" style="left:1026px;width:76px"></div><div class="t" style="left:1124px">142</div><div class="bar bp" style="left:1160px;width:48px"></div><div class="t rt" style="right:470px">95</div><div class="t" style="left:1357px;letter-spacing:-0.15px">Cervelo - Caledonia Rival eTap AXS Disc Road Used for 3,431 miles. Wear</div></div><div class="r odd" style="top:704px;height:41px;--tt:11px;--bt:9px;--it:6px"><i class="vb" style="left:306px"></i><i class="vb" style="left:438px"></i><i class="vb" style="left:492px"></i><i class="vb" style="left:557px"></i><i class="vb" style="left:614px"></i><i class="vb" style="left:785px"></i><i class="vb" style="left:851px"></i><i class="vb" style="left:985px"></i><i class="vb" style="left:1119px"></i><i class="vb" style="left:1253px"></i><i class="vb" style="left:1352px"></i><i class="vb lb" style="left:1px"></i><div class="icw" style="left:2px"><svg width="30" height="30" viewBox="0 0 30 30"><defs><clipPath id="c"><rect width="30" height="30" rx="2"/></clipPath></defs><rect width="30" height="30" rx="2" fill="#b3191c"/><g clip-path="url(#c)" stroke="#fff" fill="none"><circle cx="-4" cy="22" r="8.9" stroke-width="1.3"/><circle cx="25.2" cy="23.6" r="9.6" stroke-width="1.4"/><g stroke-linecap="round"><path d="M8.2 10 L6.9 25.2" stroke-width="2.2"/><path d="M10 11.5 L14.6 17.4 L9 24.6" stroke-width="2.4" stroke-linejoin="round"/><path d="M19.3 12 L14.2 20.5" stroke-width="2.1"/><path d="M20.3 12.2 L23.9 20.8" stroke-width="2.5"/></g></g><rect x="7.1" y="6.9" width="14.8" height="5.5" rx="1.5" fill="#fff"/><circle cx="25.05" cy="6.04" r="2.9" fill="#fff"/><rect x="0.5" y="0.5" width="29" height="29" rx="1.6" fill="none" stroke="#9c1417" stroke-width="1" stroke-opacity="0.7"/></svg></div><div class="t" style="left:40px">Atascocita - Walden - Huffman</div><div class="t" style="left:311px">7/12/22 8:46 AM</div><div class="t" style="left:443px">Road</div><div class="t rt" style="right:1265px">34.32 mi</div><div class="t rt" style="right:1208px">2:33:53</div><div class="t" style="left:618px">13.4 mph</div><div class="bar bs" style="left:692px;width:68px"></div><div class="t rt" style="right:971px">4:29 /mi</div><div class="t rt" style="right:938px">80</div><div class="bar be" style="left:892px;width:23px"></div><div class="t" style="left:990px">127</div><div class="bar bh" style="left:1026px;width:79px"></div><div class="t" style="left:1124px">135</div><div class="bar bp" style="left:1160px;width:46px"></div><div class="t rt" style="right:470px">79</div><div class="t" style="left:1357px;letter-spacing:-0.15px">Cervelo - Caledonia Rival eTap AXS Disc Road Used for 3,148 miles. Wear</div></div><div class="r even" style="top:746px;height:41px;--tt:11px;--bt:9px;--it:6px"><i class="vb" style="left:306px"></i><i class="vb" style="left:438px"></i><i class="vb" style="left:492px"></i><i class="vb" style="left:557px"></i><i class="vb" style="left:614px"></i><i class="vb" style="left:785px"></i><i class="vb" style="left:851px"></i><i class="vb" style="left:985px"></i><i class="vb" style="left:1119px"></i><i class="vb" style="left:1253px"></i><i class="vb" style="left:1352px"></i><i class="vb lb" style="left:1px"></i><div class="icw" style="left:2px"><svg width="30" height="30" viewBox="0 0 30 30"><defs><clipPath id="c"><rect width="30" height="30" rx="2"/></clipPath></defs><rect width="30" height="30" rx="2" fill="#b3191c"/><g clip-path="url(#c)" stroke="#fff" fill="none"><circle cx="-4" cy="22" r="8.9" stroke-width="1.3"/><circle cx="25.2" cy="23.6" r="9.6" stroke-width="1.4"/><g stroke-linecap="round"><path d="M8.2 10 L6.9 25.2" stroke-width="2.2"/><path d="M10 11.5 L14.6 17.4 L9 24.6" stroke-width="2.4" stroke-linejoin="round"/><path d="M19.3 12 L14.2 20.5" stroke-width="2.1"/><path d="M20.3 12.2 L23.9 20.8" stroke-width="2.5"/></g></g><rect x="7.1" y="6.9" width="14.8" height="5.5" rx="1.5" fill="#fff"/><circle cx="25.05" cy="6.04" r="2.9" fill="#fff"/><rect x="0.5" y="0.5" width="29" height="29" rx="1.6" fill="none" stroke="#9c1417" stroke-width="1" stroke-opacity="0.7"/></svg></div><div class="t" style="left:40px">Atascocita - Walden - Huffman</div><div class="t" style="left:311px">6/28/22 8:57 AM</div><div class="t" style="left:443px">Road</div><div class="t rt" style="right:1265px">36.37 mi</div><div class="t rt" style="right:1208px">2:40:59</div><div class="t" style="left:618px">13.6 mph</div><div class="bar bs" style="left:692px;width:69px"></div><div class="t rt" style="right:971px">4:26 /mi</div><div class="t rt" style="right:938px">92</div><div class="bar be" style="left:892px;width:27px"></div><div class="t" style="left:990px">124</div><div class="bar bh" style="left:1026px;width:77px"></div><div class="t" style="left:1124px">139</div><div class="bar bp" style="left:1160px;width:47px"></div><div class="t rt" style="right:470px">89</div><div class="t" style="left:1357px;letter-spacing:-0.15px">Cervelo - Caledonia Rival eTap AXS Disc Road Used for 2,866 miles. Wear</div></div><div class="r odd" style="top:788px;height:41px;--tt:11px;--bt:8px;--it:5px"><i class="vb" style="left:306px"></i><i class="vb" style="left:438px"></i><i class="vb" style="left:492px"></i><i class="vb" style="left:557px"></i><i class="vb" style="left:614px"></i><i class="vb" style="left:785px"></i><i class="vb" style="left:851px"></i><i class="vb" style="left:985px"></i><i class="vb" style="left:1119px"></i><i class="vb" style="left:1253px"></i><i class="vb" style="left:1352px"></i><i class="vb lb" style="left:1px"></i><div class="icw" style="left:2px"><svg width="30" height="30" viewBox="0 0 30 30"><defs><clipPath id="c"><rect width="30" height="30" rx="2"/></clipPath></defs><rect width="30" height="30" rx="2" fill="#b3191c"/><g clip-path="url(#c)" stroke="#fff" fill="none"><circle cx="-4" cy="22" r="8.9" stroke-width="1.3"/><circle cx="25.2" cy="23.6" r="9.6" stroke-width="1.4"/><g stroke-linecap="round"><path d="M8.2 10 L6.9 25.2" stroke-width="2.2"/><path d="M10 11.5 L14.6 17.4 L9 24.6" stroke-width="2.4" stroke-linejoin="round"/><path d="M19.3 12 L14.2 20.5" stroke-width="2.1"/><path d="M20.3 12.2 L23.9 20.8" stroke-width="2.5"/></g></g><rect x="7.1" y="6.9" width="14.8" height="5.5" rx="1.5" fill="#fff"/><circle cx="25.05" cy="6.04" r="2.9" fill="#fff"/><rect x="0.5" y="0.5" width="29" height="29" rx="1.6" fill="none" stroke="#9c1417" stroke-width="1" stroke-opacity="0.7"/></svg></div><div class="t" style="left:40px">Atascocita - Walden - Huffman</div><div class="t" style="left:311px">6/20/22 8:59 AM</div><div class="t" style="left:443px">Road</div><div class="t rt" style="right:1265px">34.12 mi</div><div class="t rt" style="right:1208px">2:27:41</div><div class="t" style="left:618px">13.9 mph</div><div class="bar bs" style="left:692px;width:71px"></div><div class="t rt" style="right:971px">4:20 /mi</div><div class="t rt" style="right:938px">80</div><div class="bar be" style="left:892px;width:23px"></div><div class="t" style="left:990px">131</div><div class="bar bh" style="left:1026px;width:81px"></div><div class="t" style="left:1124px">141</div><div class="bar bp" style="left:1160px;width:48px"></div><div class="t rt" style="right:470px">89</div><div class="t" style="left:1357px;letter-spacing:-0.15px">Cervelo - Caledonia Rival eTap AXS Disc Road Used for 2,685 miles. Wear</div></div><div class="r even" style="top:830px;height:41px;--tt:11px;--bt:8px;--it:5px"><i class="vb" style="left:306px"></i><i class="vb" style="left:438px"></i><i class="vb" style="left:492px"></i><i class="vb" style="left:557px"></i><i class="vb" style="left:614px"></i><i class="vb" style="left:785px"></i><i class="vb" style="left:851px"></i><i class="vb" style="left:985px"></i><i class="vb" style="left:1119px"></i><i class="vb" style="left:1253px"></i><i class="vb" style="left:1352px"></i><i class="vb lb" style="left:1px"></i><div class="icw" style="left:2px"><svg width="30" height="30" viewBox="0 0 30 30"><defs><clipPath id="c"><rect width="30" height="30" rx="2"/></clipPath></defs><rect width="30" height="30" rx="2" fill="#b3191c"/><g clip-path="url(#c)" stroke="#fff" fill="none"><circle cx="-4" cy="22" r="8.9" stroke-width="1.3"/><circle cx="25.2" cy="23.6" r="9.6" stroke-width="1.4"/><g stroke-linecap="round"><path d="M8.2 10 L6.9 25.2" stroke-width="2.2"/><path d="M10 11.5 L14.6 17.4 L9 24.6" stroke-width="2.4" stroke-linejoin="round"/><path d="M19.3 12 L14.2 20.5" stroke-width="2.1"/><path d="M20.3 12.2 L23.9 20.8" stroke-width="2.5"/></g></g><rect x="7.1" y="6.9" width="14.8" height="5.5" rx="1.5" fill="#fff"/><circle cx="25.05" cy="6.04" r="2.9" fill="#fff"/><rect x="0.5" y="0.5" width="29" height="29" rx="1.6" fill="none" stroke="#9c1417" stroke-width="1" stroke-opacity="0.7"/></svg></div><div class="t" style="left:40px">Atascocita - Walden - Huffman</div><div class="t" style="left:311px">6/7/22 10:27 AM</div><div class="t" style="left:443px">Road</div><div class="t rt" style="right:1265px">34.20 mi</div><div class="t rt" style="right:1208px">2:32:26</div><div class="t" style="left:618px">13.5 mph</div><div class="bar bs" style="left:692px;width:69px"></div><div class="t rt" style="right:971px">4:27 /mi</div><div class="t rt" style="right:938px">82</div><div class="bar be" style="left:892px;width:24px"></div><div class="t" style="left:990px">125</div><div class="bar bh" style="left:1026px;width:77px"></div><div class="t" style="left:1124px">133</div><div class="bar bp" style="left:1160px;width:45px"></div><div class="t rt" style="right:470px">125</div><div class="t" style="left:1357px;letter-spacing:-0.15px">Cervelo - Caledonia Rival eTap AXS Disc Road Used for 2,420 miles. Wear</div></div>
</div>
</body></html>
